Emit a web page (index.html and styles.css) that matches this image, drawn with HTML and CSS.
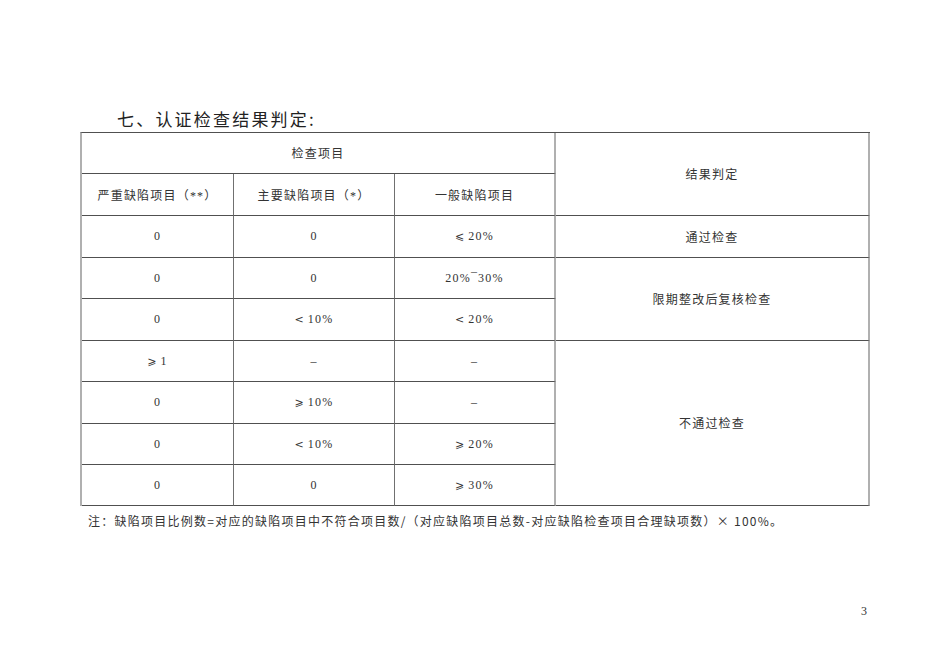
FILE: index.html
```html
<!DOCTYPE html>
<html lang="zh-CN">
<head>
<meta charset="utf-8">
<title>认证检查结果判定</title>
<link rel="stylesheet" href="styles.css">
</head>
<body>
<div class="page">
  <h2 class="title">七、认证检查结果判定:</h2>
  <table class="grid">
    <colgroup>
      <col class="c1"><col class="c2"><col class="c3"><col class="c4">
    </colgroup>
    <tr class="h41">
      <td colspan="3" class="sep">检查项目</td>
      <td rowspan="2" class="last">结果判定</td>
    </tr>
    <tr class="h42">
      <td>严重缺陷项目（**）</td>
      <td>主要缺陷项目（*）</td>
      <td class="sep">一般缺陷项目</td>
    </tr>
    <tr class="h42">
      <td>0</td><td>0</td><td class="sep"><span class="sym">⩽</span>20%</td>
      <td class="last">通过检查</td>
    </tr>
    <tr class="h41">
      <td>0</td><td>0</td><td class="sep">20%¯30%</td>
      <td rowspan="2" class="last">限期整改后复核检查</td>
    </tr>
    <tr class="h42">
      <td>0</td><td><span class="sym">&lt;</span>10%</td><td class="sep"><span class="sym">&lt;</span>20%</td>
    </tr>
    <tr class="h41">
      <td><span class="sym">⩾</span>1</td><td>–</td><td class="sep">–</td>
      <td rowspan="4" class="last">不通过检查</td>
    </tr>
    <tr class="h42">
      <td>0</td><td><span class="sym">⩾</span>10%</td><td class="sep">–</td>
    </tr>
    <tr class="h41">
      <td>0</td><td><span class="sym">&lt;</span>10%</td><td class="sep"><span class="sym">⩾</span>20%</td>
    </tr>
    <tr class="h41">
      <td>0</td><td>0</td><td class="sep"><span class="sym">⩾</span>30%</td>
    </tr>
  </table>
  <p class="note">注：缺陷项目比例数=对应的缺陷项目中不符合项目数/（对应缺陷项目总数-对应缺陷检查项目合理缺项数）× 100%。</p>
  <div class="pageno">3</div>
</div>
</body>
</html>
```
FILE: styles.css
```css
html, body {
  margin: 0;
  padding: 0;
  background: #ffffff;
}

.page {
  width: 790px;
  padding: 107px 0 0 80px;
  font-family: "Liberation Serif", "Noto Sans CJK SC", serif;
  color: #2a2a2a;
}

.title {
  margin: 0 0 1px 0;
  padding-left: 37px;
  font-family: "Noto Sans CJK SC", sans-serif;
  font-weight: normal;
  font-size: 17px;
  line-height: 24px;
  letter-spacing: 2.2px;
  color: #222;
}

.grid {
  border-spacing: 0;
  table-layout: fixed;
  width: 790px;
  border-top: 1px solid #505050;
  border-left: 2px solid #b0b0b0;
}

.c1 { width: 152px; }
.c2 { width: 161px; }
.c3 { width: 161px; }
.c4 { width: 314px; }

.grid td {
  padding: 0;
  box-sizing: border-box;
  text-align: center;
  vertical-align: middle;
  font-size: 12px;
  letter-spacing: 1.2px;
  border-right: 1px solid #707070;
  border-bottom: 1px solid #505050;
  color: #333;
}

.grid td.sep {
  border-right: 2px solid #b0b0b0;
}

.grid td.last {
  border-right: 2px solid #b0b0b0;
}

.sym {
  font-family: "DejaVu Sans", "Noto Sans CJK SC", sans-serif;
  font-size: 11px;
  margin-right: 4px;
  letter-spacing: 0;
}

.h41 { height: 41px; }
.h42 { height: 42px; }

.note {
  margin: 5px 0 0 8px;
  font-family: "Noto Sans CJK SC", sans-serif;
  font-size: 12px;
  line-height: 20px;
  letter-spacing: 1.25px;
  color: #333;
}

.pageno {
  margin-top: 70px;
  padding-right: 3px;
  text-align: right;
  font-size: 12px;
  line-height: 20px;
  color: #333;
}
```
